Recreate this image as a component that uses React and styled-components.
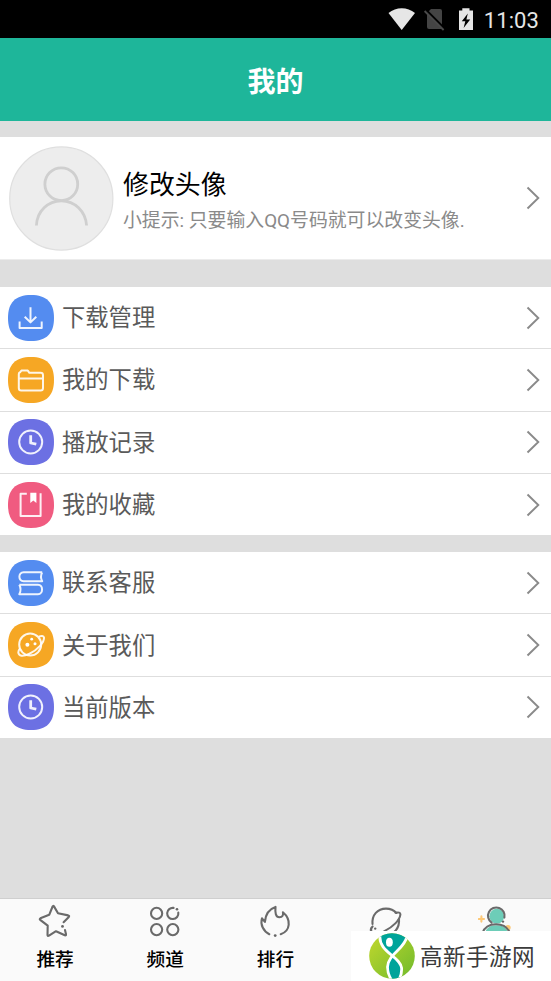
import React from 'react';
import styled, { createGlobalStyle } from 'styled-components';

const GlobalStyle = createGlobalStyle`
  * {
    box-sizing: border-box;
  }
  body {
    margin: 0;
    background: #dedede;
    font-family: Roboto, "Noto Sans CJK SC", sans-serif;
  }
`;

const Screen = styled.div`
  position: relative;
  display: flex;
  flex-direction: column;
  height: 981px;
  overflow: hidden;
  background: #dedede;
`;

const StatusBar = styled.div`
  display: flex;
  justify-content: flex-end;
  align-items: center;
  flex: none;
  height: 38px;
  padding-right: 12px;
  background: #000;
  color: #e6e6e6;
  svg {
    flex: none;
  }
`;

const Clock = styled.span`
  margin-left: 4px;
  padding-top: 2px;
  font-size: 22px;
  letter-spacing: 0.1px;
`;

const Header = styled.header`
  display: flex;
  justify-content: center;
  align-items: center;
  flex: none;
  height: 83px;
  background: #1eb69a;
  h1 {
    margin: 0;
    padding-top: 7px;
    color: #fff;
    font-size: 28px;
    font-weight: 700;
    line-height: 40px;
  }
`;

const Profile = styled.section`
  display: flex;
  align-items: center;
  flex: none;
  height: 123px;
  margin-top: 16px;
  padding: 0 11px 0 9px;
  background: #fff;
  border-bottom: 1px solid #ececec;
`;

const ProfileText = styled.div`
  flex: 1;
  padding: 5px 0 0 9px;
  white-space: nowrap;
`;

const Name = styled.div`
  color: #000;
  font-size: 25.9px;
  line-height: 38px;
`;

const Hint = styled.div`
  margin-top: 3px;
  color: #8a8a8a;
  font-size: 18.85px;
  line-height: 28px;
`;

const Menu = styled.section`
  flex: none;
  margin-top: ${(p) => p.$gap}px;
  background: #fff;
`;

const MenuRow = styled.div`
  display: flex;
  align-items: center;
  height: 62.3px;
  padding: 0 11px 0 8px;
  border-bottom: 1px solid #dedede;
`;

const MenuLabel = styled.span`
  flex: 1;
  padding: 1px 0 0 8px;
  color: #5a5a5a;
  font-size: 23.3px;
  line-height: 34px;
`;

const TabBar = styled.nav`
  display: grid;
  grid-template-columns: repeat(5, 1fr);
  flex: none;
  height: 83px;
  margin-top: auto;
  background: #fafafa;
  border-top: 1px solid #cfcfcf;
`;

const Tab = styled.div`
  display: flex;
  flex-direction: column;
  align-items: center;
  padding-top: 4px;
  color: #000;
  font-size: 18.7px;
  font-weight: 500;
  line-height: 28px;
  svg {
    margin-bottom: 7px;
  }
`;

const Watermark = styled.div`
  position: absolute;
  right: 0;
  bottom: 0;
  display: flex;
  align-items: center;
  width: 200px;
  height: 50px;
  padding-left: 18px;
  background: #fff;
  color: #3c3c3c;
  font-size: 22.6px;
  letter-spacing: 0.4px;
  white-space: nowrap;
  span {
    padding: 0 0 1px 5px;
  }
`;

const Arrow = () => (
  <svg width="14" height="24" viewBox="0 0 14 24" fill="none" stroke="#8a8a8a" strokeWidth="1.9">
    <path d="M1.5 1.5L12.3 12L1.5 22.5" />
  </svg>
);

const glyphs = {
  download: (
    <path d="M22.5 12.3V27.3M16.7 21.7L22.5 27.4L28.3 21.7M11.6 26.5V33H33.7V26.5" />
  ),
  folder: (
    <path d="M10.8 17Q10.8 15.7 12 15.3L13.4 13.6H19.8L21.4 15.8H32.6Q35 15.8 35 18.2V31Q35 33.5 32.6 33.5H13.2Q10.8 33.5 10.8 31ZM10.8 21.5H35" />
  ),
  clock: (
    <>
      <circle cx="22.7" cy="23" r="11.5" />
      <path d="M22.7 16.3V24L28.3 25.2" strokeWidth="2.8" />
    </>
  ),
  book: (
    <>
      <path d="M18.8 11.7H12.6V33.9H32.6V11.2" />
      <path d="M22.3 10.8H28.4V21L25.3 18.4L22.3 21Z" fill="#fff" stroke="none" />
    </>
  ),
  books: (
    <>
      <path d="M34.2 12.2H15.6C10 12.2 10 21.3 15.6 21.3H34.2Q31.8 16.8 34.2 12.2" />
      <path d="M11.3 24.7H30C35.4 24.7 35.4 34.2 30 34.2H11.3Q13.8 29.4 11.3 24.7" />
    </>
  ),
  planet: (
    <>
      <circle cx="22.2" cy="22.6" r="11" />
      <path d="M30.8 14.6C33.4 13.6 35.6 13.7 36 15.4C36.7 20 29 28.5 21 32C15 34.6 10.6 34.3 10.3 30.5C10.2 29 11 27.6 12 26.4" />
      <g fill="#fff" stroke="none">
        <circle cx="19.4" cy="22.8" r="2" />
        <circle cx="23.7" cy="17.2" r="1.4" />
        <circle cx="27" cy="21.8" r="1.5" />
      </g>
    </>
  ),
};

const Badge = ({ color, icon }) => (
  <svg width="46" height="46" viewBox="0 0 46 46" fill="none">
    <path d="M23 0C38.5 0 46 7.5 46 23S38.5 46 23 46S0 38.5 0 23S7.5 0 23 0Z" fill={color} />
    <g stroke="#fff" strokeOpacity="0.9" strokeWidth="2" strokeLinejoin="round">
      {glyphs[icon]}
    </g>
  </svg>
);

const Avatar = () => (
  <svg width="105" height="105" viewBox="0 0 105 105" fill="none">
    <circle cx="52.3" cy="52.5" r="51.6" fill="#ededed" stroke="#dfdfdf" strokeWidth="1.2" />
    <g stroke="#cfcfcf" strokeWidth="2.8">
      <circle cx="52.3" cy="38.2" r="16.4" />
      <path d="M27.4 79.5C28 65 39 54.8 52.3 54.8S76.6 65 77.6 79.5" />
    </g>
  </svg>
);

const StatusIcons = () => (
  <svg width="92" height="26" viewBox="0 0 92 26">
    <path d="M0.5 7C8 .6 19.5 .6 27 7L13.7 24Z" fill="#e6e6e6" />
    <path d="M43 3H52Q54 3 54 5V23H41Q39 23 39 21V7Z" fill="#444" />
    <path d="M37.5 3.5L57 23" stroke="#000" strokeWidth="2.4" />
    <path d="M36.6 5L55.6 24" stroke="#4a4a4a" strokeWidth="1.8" />
    <path d="M71 4.5H74.3V2.2H81.5V4.5H85V24H71Z" fill="#e6e6e6" />
    <path d="M79.8 7.5L73.8 15.3H77.3L75.6 22L82.2 13.4H78.4Z" fill="#000" />
  </svg>
);

const TabIcon = ({ children }) => (
  <svg
    width="36"
    height="36"
    viewBox="0 0 36 36"
    fill="none"
    stroke="#6a6a6a"
    strokeWidth="2.1"
    strokeLinecap="round"
    strokeLinejoin="round"
  >
    {children}
  </svg>
);

const StarIcon = () => (
  <TabIcon>
    <path d="M26.6 19.2L31.8 13.9Q32.7 12.8 31.2 12.4L21 10.3L17 3.4Q16.2 2.4 15.6 3.5L12.2 11.8L3.4 15.3Q2.3 16 3.2 16.8L10.7 22.7L10.5 32.2Q10.7 33.4 12 32.7L19 28.2L27.8 32.3Q29.3 32.7 29 31.2L28 27" />
    <circle cx="25.5" cy="23.4" r="1.4" fill="#666" stroke="none" />
  </TabIcon>
);

const ChannelIcon = () => (
  <TabIcon>
    <circle cx="9.6" cy="10.4" r="5.6" />
    <circle cx="9.6" cy="26.6" r="5.6" />
    <circle cx="25.8" cy="26.6" r="5.6" />
    <path d="M26.6 4.9A5.6 5.6 0 1 0 31.3 9.6" />
    <circle cx="30" cy="6.3" r="1.3" fill="#666" stroke="none" />
  </TabIcon>
);

const FlameIcon = () => (
  <TabIcon>
    <path d="M12.3 31.2C6.5 28.5 3 21.5 5 15.3L7.9 18.9C8.5 11.5 12 6 18.5 3.9C18 9.5 18.6 14.3 22.5 14.3C25.5 14.3 26.7 12 25.9 9.3C34.5 16.5 33.5 28 23.7 31.2" />
    <circle cx="18.2" cy="32.6" r="1.4" fill="#666" stroke="none" />
  </TabIcon>
);

const PlanetIcon = () => (
  <TabIcon>
    <path d="M4.5 21C3.8 12 9.5 5.6 18 5.6C22.5 5.6 26 7.2 28.4 10M31 16C31.8 25 26 32 18 32" />
    <path d="M27.5 9.8Q32.4 8.6 32.4 11.5C31.8 17 25 24 16 28.4M4.6 23.4Q1.8 26 3.4 29" />
    <circle cx="7.2" cy="25.6" r="1.2" fill="#666" stroke="none" />
  </TabIcon>
);

const MineIcon = () => (
  <TabIcon>
    <circle cx="30" cy="24.6" r="2.7" fill="#fdc877" stroke="none" />
    <path d="M3.4 13.4V18.6M.8 16H6" stroke="#fdc877" />
    <circle cx="18.8" cy="13.2" r="7.4" fill="#6dcdb8" stroke="none" />
    <path d="M13.6 19.6A8.3 8.3 0 1 1 26.4 14.6" />
    <circle cx="25" cy="18.6" r="1.2" fill="#666" stroke="none" />
    <path d="M6 34C7 25 12 22.2 18.5 22.2S30 25 31 34Z" fill="#6dcdb8" stroke="none" />
    <path d="M4.5 30C6.5 24 11.5 21.2 18.1 21.2S28.5 23.6 31 28" />
  </TabIcon>
);

const Logo = () => (
  <svg width="46" height="46" viewBox="0 0 46 46">
    <defs>
      <linearGradient id="leaf" x1="0" y1="0" x2="1" y2="1">
        <stop offset="0" stopColor="#c3d82d" />
        <stop offset="1" stopColor="#6fba2c" />
      </linearGradient>
      <clipPath id="disc">
        <circle cx="23" cy="23" r="22.8" />
      </clipPath>
    </defs>
    <g clipPath="url(#disc)">
      <rect width="46" height="46" fill="url(#leaf)" />
      <path d="M11 0C10 12 17 18 24.5 23C29 18 36 12 37 4V0Z" fill="#00a49a" />
      <path d="M23.5 24C30 29 34 35 31 46H22C18 38 18 31 23.5 24Z" fill="#00a49a" />
      <path d="M38 3C36 16 19 21 18.5 34Q18.5 41 22.5 47" fill="none" stroke="#fff" strokeWidth="2.8" />
      <path d="M11 2C9 19 31 23 32.6 35Q33 41 30 47" fill="none" stroke="#fff" strokeWidth="2.8" />
      <ellipse cx="20.4" cy="9.3" rx="3.4" ry="4.5" fill="#fff" />
    </g>
  </svg>
);

const downloads = [
  { label: '下载管理', color: '#548cf0', icon: 'download' },
  { label: '我的下载', color: '#f6a724', icon: 'folder' },
  { label: '播放记录', color: '#6c70e3', icon: 'clock' },
  { label: '我的收藏', color: '#f05b80', icon: 'book' },
];

const about = [
  { label: '联系客服', color: '#548cf0', icon: 'books' },
  { label: '关于我们', color: '#f6a724', icon: 'planet' },
  { label: '当前版本', color: '#6c70e3', icon: 'clock' },
];

const MenuList = ({ items, gap }) => (
  <Menu $gap={gap}>
    {items.map(({ label, color, icon }) => (
      <MenuRow key={label}>
        <Badge color={color} icon={icon} />
        <MenuLabel>{label}</MenuLabel>
        <Arrow />
      </MenuRow>
    ))}
  </Menu>
);

function App() {
  return (
    <>
      <GlobalStyle />
      <Screen>
        <StatusBar>
          <StatusIcons />
          <Clock>11:03</Clock>
        </StatusBar>
        <Header>
          <h1>我的</h1>
        </Header>
        <Profile>
          <Avatar />
          <ProfileText>
            <Name>修改头像</Name>
            <Hint>小提示: 只要输入QQ号码就可以改变头像.</Hint>
          </ProfileText>
          <Arrow />
        </Profile>
        <MenuList items={downloads} gap={27} />
        <MenuList items={about} gap={16} />
        <TabBar>
          <Tab><StarIcon />推荐</Tab>
          <Tab><ChannelIcon />频道</Tab>
          <Tab><FlameIcon />排行</Tab>
          <Tab><PlanetIcon /></Tab>
          <Tab><MineIcon /></Tab>
        </TabBar>
        <Watermark>
          <Logo />
          <span>高新手游网</span>
        </Watermark>
      </Screen>
    </>
  );
}

export default App;
